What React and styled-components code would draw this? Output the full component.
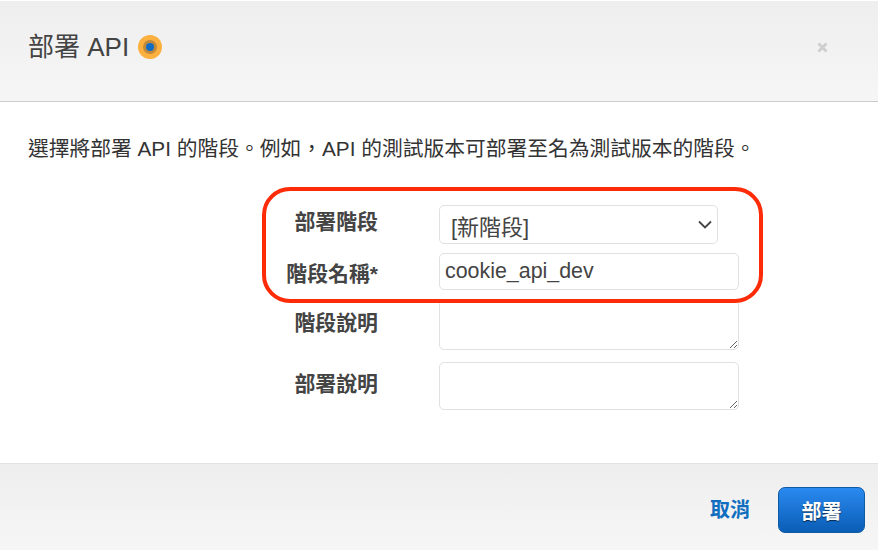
import React from 'react'
import styled, { createGlobalStyle } from 'styled-components'

const FONT = `"Liberation Sans", "Noto Sans CJK TC", sans-serif`

const Global = createGlobalStyle`
  html, body { margin: 0; padding: 0; background: #fff; }
  body { font-family: ${FONT}; color: #444; }
`

const Dialog = styled.div`
  position: relative;
  width: 878px;
  height: 550px;
  overflow: hidden;
  display: flex;
  flex-direction: column;
`

const Header = styled.header`
  height: 101px;
  box-sizing: border-box;
  margin-top: 1px;
  padding: 0 50px 8px 28px;
  display: flex;
  align-items: center;
  justify-content: space-between;
  background: linear-gradient(#eeeeee, #f6f6f6);
  border-bottom: 1px solid #cccccc;
`

const TitleWrap = styled.div`
  display: flex;
  align-items: center;
  gap: 9px;
`

const Title = styled.h1`
  margin: 0;
  font-size: 26px;
  font-weight: 400;
  line-height: 32px;
  color: #444;
`

const Close = styled.svg`
  width: 11px;
  height: 11px;
`

const Body = styled.div`
  flex: 1;
  padding: 32px 0 0 28px;
`

const Intro = styled.p`
  margin: 0 0 41px;
  font-size: 20.75px;
  line-height: 30px;
  color: #333;
  white-space: nowrap;
`

const Form = styled.div`
  display: grid;
  grid-template-columns: 350px 300px;
  column-gap: 61px;
  row-gap: 9px;
`

const Label = styled.label`
  font-size: 20.9px;
  font-weight: 700;
  color: #444;
  text-align: right;
  line-height: 28px;
  padding-top: ${p => p.$top}px;
`

const SelectBox = styled.div`
  width: 279px;
  height: 39px;
  box-sizing: border-box;
  border: 1px solid #e1e1e1;
  border-radius: 5px;
  padding: 0 5px 0 11px;
  display: flex;
  align-items: center;
  justify-content: space-between;
  font-size: 22px;
  color: #444;
  background: #fff;
`

const TextInput = styled.input`
  width: 300px;
  height: 37px;
  box-sizing: border-box;
  border: 1px solid #e1e1e1;
  border-radius: 5px;
  padding: 0 5px;
  font-family: ${FONT};
  font-size: 21.4px;
  color: #444;
  outline: none;
  background: #fff;
`

const TextArea = styled.textarea`
  display: block;
  width: 300px;
  height: ${p => p.$h}px;
  margin: ${p => p.$mt}px 0 0;
  box-sizing: border-box;
  border: 1px solid #e1e1e1;
  border-radius: 5px;
  outline: none;
`

const Footer = styled.footer`
  height: 87px;
  box-sizing: border-box;
  border-top: 1px solid #e2e2e2;
  background: linear-gradient(#eeeeee, #f6f6f6);
  display: flex;
  align-items: flex-start;
  justify-content: flex-end;
  padding: 23px 13px 0 0;
  gap: 28px;
`

const Cancel = styled.a`
  font-size: 20px;
  font-weight: 700;
  line-height: 46px;
  color: #0f6ebf;
`

const Deploy = styled.button`
  width: 87px;
  height: 46px;
  box-sizing: border-box;
  border: 1px solid #0d5aa5;
  border-radius: 7px;
  background: linear-gradient(#2a8af0, #0a5db5);
  color: #fff;
  font-family: ${FONT};
  font-size: 20px;
  font-weight: 700;
  text-shadow: 0 1px 1px rgba(0, 0, 0, 0.6);
`

const Highlight = styled.div`
  position: absolute;
  left: 262px;
  top: 187px;
  width: 501px;
  height: 116px;
  box-sizing: border-box;
  border: 4.5px solid #fe2b08;
  border-radius: 28px;
  pointer-events: none;
`

const Dot = () => (
  <svg width="24" height="24" viewBox="0 0 24 24">
    <circle cx="12" cy="12" r="12" fill="#fbb03f" />
    <circle cx="12" cy="12" r="7" fill="#c2893a" />
    <circle cx="12" cy="12" r="4" fill="#0f6cc4" />
  </svg>
)

const Chevron = () => (
  <svg width="14" height="9" viewBox="0 0 14 9" fill="none">
    <path d="M1 1.5 L7 7.5 L13 1.5" stroke="#444" strokeWidth="1.8" />
  </svg>
)

export default function App() {
  return (
    <>
      <Global />
      <Dialog>
        <Header>
          <TitleWrap>
            <Title>部署 API</Title>
            <Dot />
          </TitleWrap>
          <Close viewBox="0 0 11 11">
            <path d="M1.5 1.5 L9.5 9.5 M9.5 1.5 L1.5 9.5" stroke="#cfcfcf" strokeWidth="3" />
          </Close>
        </Header>
        <Body>
          <Intro>選擇將部署 API 的階段。例如，API 的測試版本可部署至名為測試版本的階段。</Intro>
          <Form>
            <Label $top={3}>部署階段</Label>
            <SelectBox>
              <span>[新階段]</span>
              <Chevron />
            </SelectBox>
            <Label $top={7}>階段名稱*</Label>
            <TextInput defaultValue="cookie_api_dev" />
            <Label $top={10}>階段說明</Label>
            <TextArea $h={50} $mt={1} />
            <Label $top={11}>部署說明</Label>
            <TextArea $h={48} $mt={3} />
          </Form>
        </Body>
        <Footer>
          <Cancel>取消</Cancel>
          <Deploy>部署</Deploy>
        </Footer>
        <Highlight />
      </Dialog>
    </>
  )
}
